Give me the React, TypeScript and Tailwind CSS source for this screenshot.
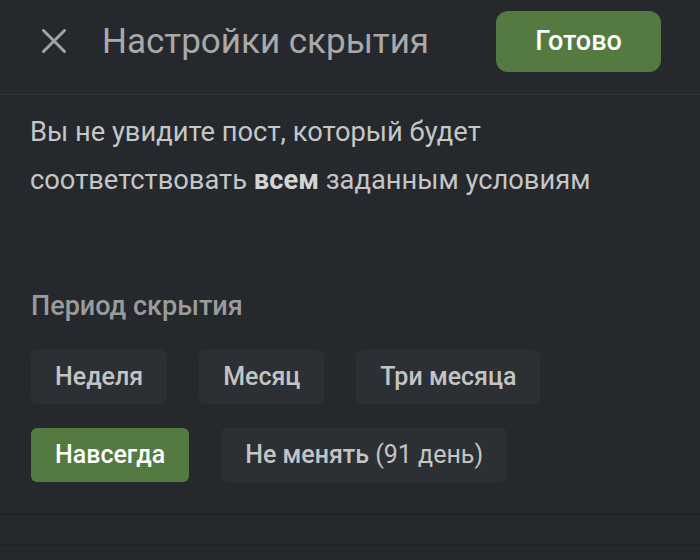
import { X } from "lucide-react";

const periods = ["Неделя", "Месяц", "Три месяца"];

export default function App() {
  return (
    <div
      className="w-[700px] h-[560px] bg-[#25292e] overflow-hidden"
      style={{ fontFamily: "Roboto, 'Noto Sans', sans-serif" }}
    >
      {/* Header */}
      <div className="h-[95px] flex items-center pb-[12px] pl-[33px] pr-[39px] border-b border-[#2e3238]">
        <X className="w-[42px] h-[42px] text-[#a3a3a3]" strokeWidth={1.7} />
        <h1 className="ml-[27px] text-[35px] text-[#a9a9a9] leading-none">
          Настройки скрытия
        </h1>
        <button className="ml-auto w-[165px] h-[61px] rounded-[12px] bg-[#547a42] text-white text-[27px] font-medium">
          Готово
        </button>
      </div>

      {/* Description */}
      <p className="pt-[13px] px-[30px] text-[27.3px] leading-[48px] text-[#c6c6c6]">
        Вы не увидите пост, который будет
        <br />
        соответствовать <b className="font-bold text-[#d4d4d4]">всем</b> заданным условиям
      </p>

      {/* Period */}
      <div className="mt-[86px] px-[31px]">
        <div className="text-[27px] leading-[32px] font-medium text-[#9b9b9b]">Период скрытия</div>
        <div className="mt-[28px] flex gap-[32px]">
          {periods.map((p) => (
            <button
              key={p}
              className="h-[54px] px-[24px] rounded-[6px] bg-[#2c3035] text-[25px] font-medium text-[#c4c4c4]"
            >
              {p}
            </button>
          ))}
        </div>
        <div className="mt-[24px] flex gap-[32px]">
          <button className="h-[54px] px-[24px] rounded-[6px] bg-[#547a42] text-[25px] font-medium text-white">
            Навсегда
          </button>
          <button className="h-[54px] px-[24px] rounded-[6px] bg-[#2c3035] text-[25px] font-medium text-[#c4c4c4]">
            Не менять <span className="font-normal">(91 день)</span>
          </button>
        </div>
      </div>

      <div className="mt-[31px] border-t-2 border-[#1f2226] h-[31px]" />
      <div className="border-t-2 border-[#1f2226]" />
    </div>
  );
}
